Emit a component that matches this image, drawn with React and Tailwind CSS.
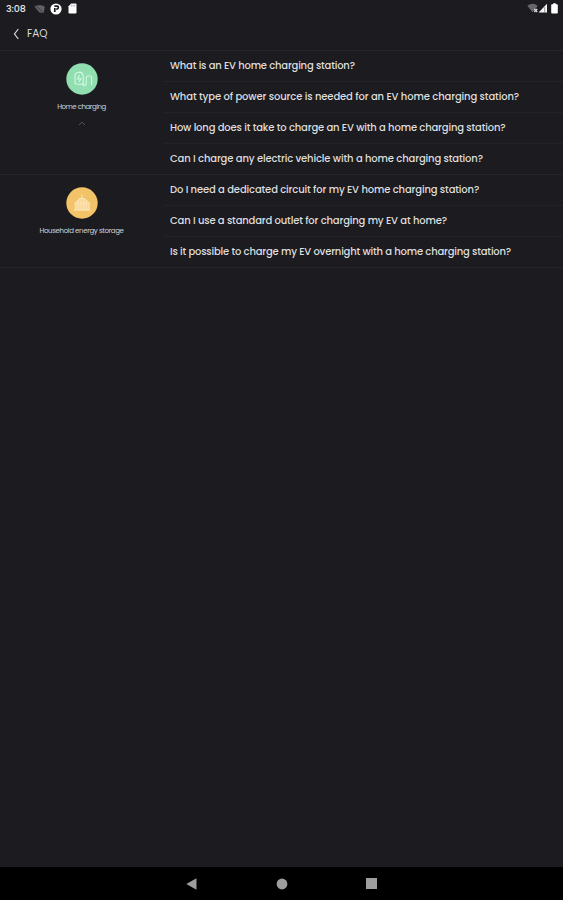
const homeQuestions = [
  { text: 'What is an EV home charging station?', tracking: 'tracking-[-0.19px]' },
  { text: 'What type of power source is needed for an EV home charging station?', tracking: 'tracking-[-0.12px]' },
  { text: 'How long does it take to charge an EV with a home charging station?', tracking: 'tracking-[-0.16px]' },
  { text: 'Can I charge any electric vehicle with a home charging station?', tracking: 'tracking-[-0.135px]' },
];

const storageQuestions = [
  { text: 'Do I need a dedicated circuit for my EV home charging station?', tracking: 'tracking-[-0.14px]' },
  { text: 'Can I use a standard outlet for charging my EV at home?', tracking: 'tracking-[-0.16px]' },
  { text: 'Is it possible to charge my EV overnight with a home charging station?', tracking: 'tracking-[-0.185px]' },
];

function StatusBar() {
  return (
    <div className="flex h-[17px] items-center pl-[6px] pr-[5px]">
      <span className="w-[28px] whitespace-nowrap text-[9.5px] font-medium leading-none tracking-[-0.1px] text-[#e8e8ea]">3:08</span>
      {/* muted wifi */}
      <svg className="h-[10px] w-[11px]" viewBox="0 0 11 10">
        <path d="M0.3 2.6Q5.5-.8 10.7 2.6L9.8 9 5.5 8.6Z" fill="#626265" />
        <path d="M1.5 1.5L10 9" stroke="#353538" strokeWidth="0.8" />
      </svg>
      <svg className="ml-[5px] h-[12px] w-[12px]" viewBox="0 0 12 12">
        <circle cx="6" cy="6" r="5.6" fill="#fff" />
        <path d="M4.4 3.2H7.2Q8.5 3.2 8.3 4.8Q8 6.3 6.2 6.2M4.8 5V9" fill="none" stroke="#1b1b20" strokeWidth="1.7" />
      </svg>
      {/* sd card */}
      <svg className="ml-[6px] h-[11px] w-[9px]" viewBox="0 0 9 11">
        <path d="M3.2.5H7.6Q8.5.5 8.5 1.4V9.6Q8.5 10.5 7.6 10.5H1.4Q.5 10.5.5 9.6V3.3Z" fill="#fff" />
        <path d="M3.3 1.8V3.5M5 1.8V3.5M6.7 1.8V3.5" stroke="#8b8b8e" strokeWidth="0.7" />
      </svg>
      <div className="ml-auto flex items-center pb-[1px]">
        <svg className="h-[10px] w-[11px]" viewBox="0 0 11 10">
          <path d="M0.3 2.7Q5.5-1 10.7 2.7L8.5 6 5.5 9.3Z" fill="#66666a" />
          <path d="M7.3 6L10.2 9M10.2 6L7.3 9" stroke="#dedee0" strokeWidth="1.3" />
        </svg>
        <svg className="h-[10px] w-[10px]" viewBox="0 0 10 10">
          <path d="M.6 9.6L9 .7V9.6Z" fill="#f5f5f5" />
          <path d="M6.7 4.2V9.6" stroke="#77777a" strokeWidth="0.8" />
        </svg>
        <svg className="ml-[3px] h-[11px] w-[7px]" viewBox="0 0 7 11">
          <path d="M2.2.3H4.8V1.3H6Q6.8 1.3 6.8 2.1V9.8Q6.8 10.6 6 10.6H1Q.2 10.6.2 9.8V2.1Q.2 1.3 1 1.3H2.2Z" fill="#fff" />
        </svg>
      </div>
    </div>
  );
}

function ChargerIcon() {
  return (
    <svg className="h-[32px] w-[32px]" viewBox="0 0 32 32" fill="none" stroke="#d2f6e0">
      <circle cx="16" cy="16" r="15.7" fill="#91deb1" stroke="none" />
      <path d="M9 20.5V12.3Q9 9.7 12 9.5L14 9.2Q17 10 17.3 13V20.5Q13 22.5 9 20.5Z" strokeWidth="1.2" />
      <path d="M13.6 12L11.5 15.8H15L12.8 19.3" strokeWidth="1.2" />
      <path d="M17 20.5V22.5Q20.3 22.8 20.3 20V14.4Q20.3 13 21.8 13H24Q25.6 13 25.6 14.5V22" strokeWidth="1.2" />
    </svg>
  );
}

function HouseIcon() {
  return (
    <svg className="h-[32px] w-[32px]" viewBox="0 0 32 32" fill="none" stroke="#fbe6b9">
      <circle cx="16" cy="16" r="15.7" fill="#f2c369" stroke="none" />
      <path d="M8.7 23V16.8L14 11.5H18L23.7 16.8V23Z" fill="#f8d99b" stroke="none" />
      <path d="M8.7 17L14 11.5H18L23.7 17M13.5 11.5H18.5M16 7.5V11.5M7.5 23.3H24.5" strokeWidth="1.1" />
      <path d="M9.5 17.5V23M12.2 15V23M15 14V23M17.7 14V23M20.3 15V23M23 17.5V23M12 16.5H20.5" strokeWidth="0.8" />
    </svg>
  );
}

function Section({ icon, label, labelClass, open, questions }) {
  return (
    <section className="flex border-t border-[#25252a]">
      <div className="flex w-[163px] shrink-0 flex-col items-center pt-[12px]">
        {icon}
        <span className={`mt-[8px] whitespace-nowrap leading-[8px] text-[#d2d2d5] ${labelClass}`}>{label}</span>
        {open && (
          <svg className="mt-[10px] h-[5px] w-[8px]" viewBox="0 0 8 5">
            <path d="M1 4L4 1.2L7 4" fill="none" stroke="#5c5c61" strokeWidth="0.9" />
          </svg>
        )}
      </div>
      <ul className="flex-1">
        {questions.map((q, i) => (
          <li key={q.text} className={`flex items-center pl-[7px] ${i ? 'h-[31px] border-t border-[#222227]' : 'h-[30px]'}`}>
            <span className={`whitespace-nowrap text-[10px] font-medium leading-none text-[#dededf] ${q.tracking}`}>{q.text}</span>
          </li>
        ))}
      </ul>
    </section>
  );
}

export default function App() {
  return (
    <div className="flex h-[900px] w-[563px] flex-col overflow-hidden bg-[#1b1b20] font-['Poppins','Inter',sans-serif]">
      <StatusBar />
      <header className="flex h-[33px] items-center pl-[13px]">
        <svg className="h-[12px] w-[7px]" viewBox="0 0 7 12">
          <path d="M5.3 1L1.5 6L5.3 11" fill="none" stroke="#dcdcde" strokeWidth="1.2" />
        </svg>
        <h1 className="ml-[7px] pt-[1px] text-[10.5px] font-normal leading-none text-[#dcdcde]">FAQ</h1>
      </header>
      <main className="flex-1">
        <Section icon={<ChargerIcon />} label="Home charging" labelClass="text-[7px] tracking-[-0.45px]" open questions={homeQuestions} />
        <Section icon={<HouseIcon />} label="Household energy storage" labelClass="text-[7px] tracking-[-0.35px]" questions={storageQuestions} />
        <div className="border-t border-[#25252a]" />
      </main>
      <nav className="grid h-[33px] grid-cols-[90px_90px_90px] items-center justify-center justify-items-center bg-black">
        <svg className="h-[12px] w-[11px]" viewBox="0 0 11 12"><path d="M.3 6L10.5.3V11.7Z" fill="#9e9e9e" /></svg>
        <svg className="h-[12px] w-[12px]" viewBox="0 0 12 12"><circle cx="6" cy="6" r="5.4" fill="#9e9e9e" /></svg>
        <div className="h-[11px] w-[11px] bg-[#9e9e9e]" />
      </nav>
    </div>
  );
}
